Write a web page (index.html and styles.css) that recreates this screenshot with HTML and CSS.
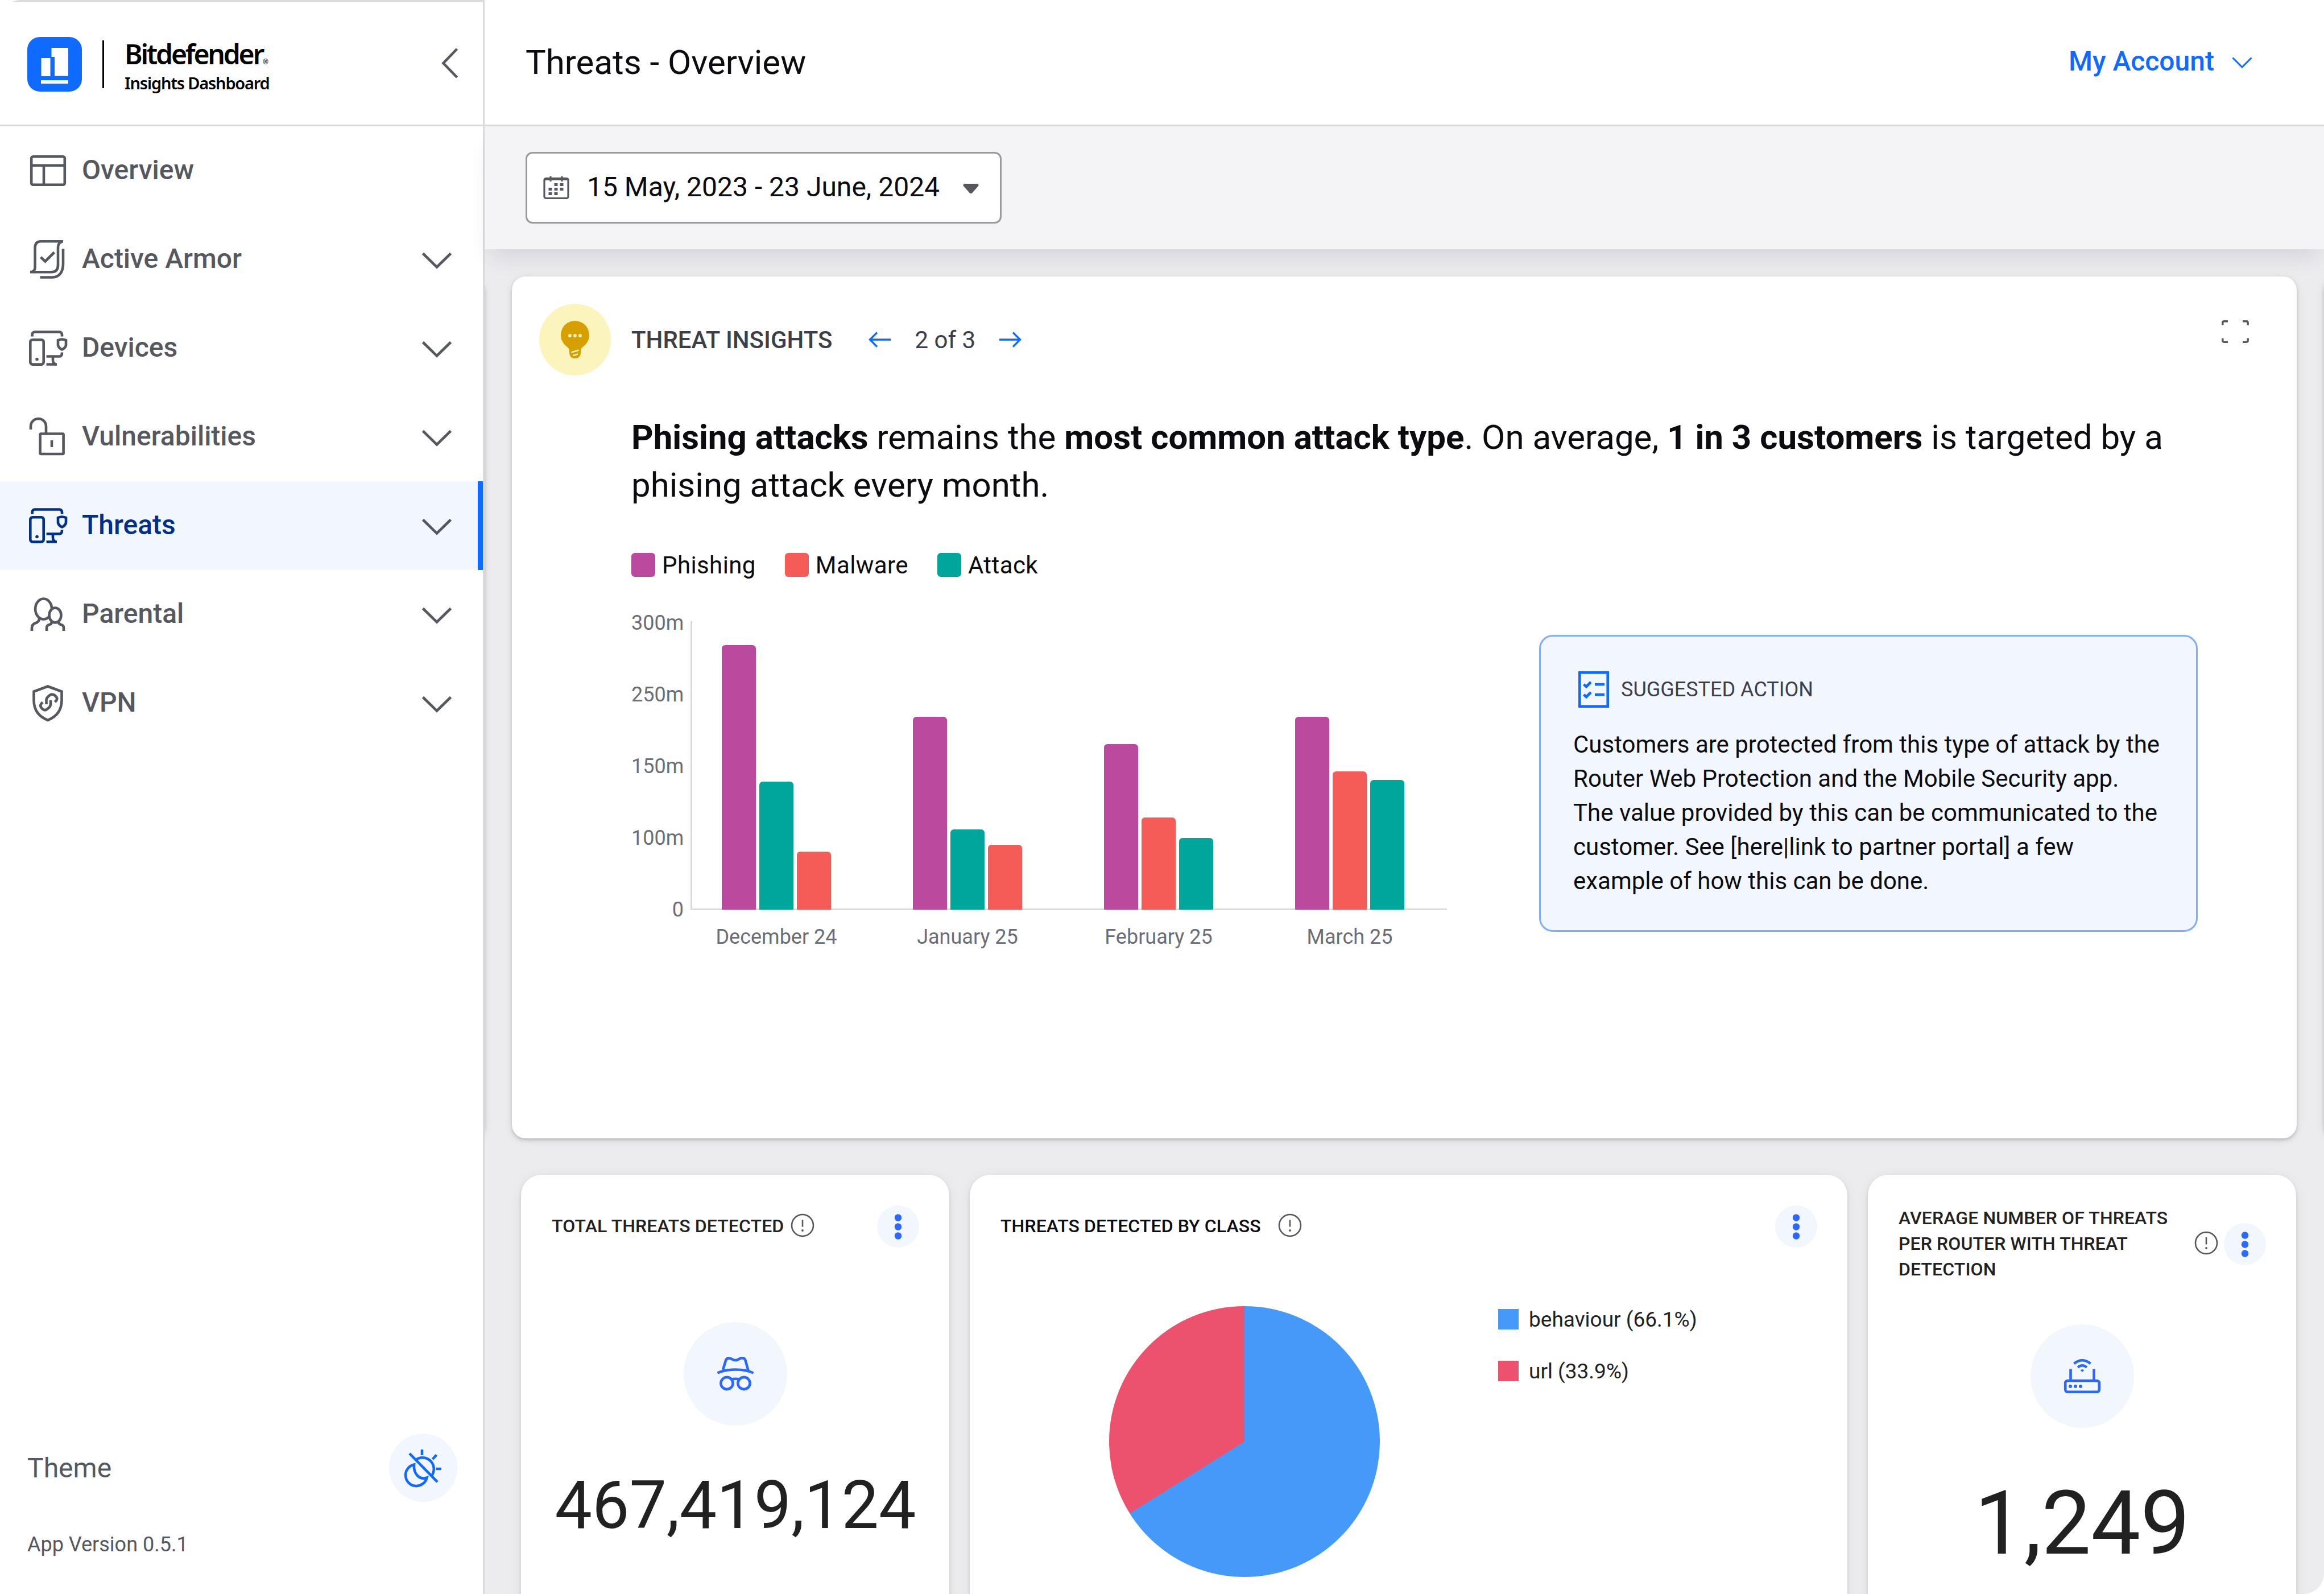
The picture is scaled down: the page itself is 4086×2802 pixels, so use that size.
FILE: index.html
```html
<!DOCTYPE html>
<html lang="en">
<head>
    <meta charset="UTF-8">
    <meta name="viewport" content="width=device-width, initial-scale=1.0">
    <title>Bitdefender Insights Dashboard</title>
    <link rel="stylesheet" href="styles.css">
</head>
<body>
    <!-- Shared icons -->
    <svg class="sprite" aria-hidden="true">
        <symbol id="chevron" viewBox="0 0 54 30">
            <path d="M2.5 2.5 27 26.500 51.500 2.500"/>
        </symbol>
        <symbol id="devices" viewBox="0 0 72 72">
            <path d="M8.600 15.500V12a4.500 4.500 0 0 1 4.500-4.500H56.500A4.500 4.500 0 0 1 61 12v3.500"/>
            <rect x="5.300" y="21.200" width="23.400" height="43.400" rx="4"/>
            <circle cx="17" cy="55.500" r="2.800" fill="currentColor" stroke="none"/>
            <path d="M54 22q7-3 14 0v9q-1.500 5-7 7.500-5.500-2.500-7-7.500z"/>
            <path d="M33.600 50.500H57q4 0 4-7M33.600 64.500H52M45 51v6q0 5 4 7"/>
        </symbol>
        <symbol id="info" viewBox="0 0 42 42">
            <circle cx="21" cy="21" r="19" stroke-width="2.600"/>
            <path d="M21 11v12.500" stroke-width="2.600"/>
            <circle cx="21" cy="30" r="1.900" fill="currentColor" stroke="none"/>
        </symbol>
        <symbol id="more" viewBox="0 0 74 74">
            <g fill="currentColor" stroke="none">
                <circle cx="37" cy="21.500" r="6.200"/>
                <circle cx="37" cy="37.500" r="6.200"/>
                <circle cx="37" cy="53.500" r="6.200"/>
            </g>
        </symbol>
    </svg>

    <div class="app">
        <aside class="sidebar">
            <div class="brand">
                <svg class="brand-logo" viewBox="0 0 96 96">
                    <rect width="96" height="96" rx="22" fill="#0f6bff"/>
                    <path fill="#fff" d="M24.500 37H40.500V69H24.500zM42.500 19H72V68.500H48V35H42.500zM24 76H72V82H24z"/>
                </svg>
                <div class="brand-text">
                    <div class="brand-name">Bitdefender<span class="reg">®</span></div>
                    <div class="brand-sub">Insights Dashboard</div>
                </div>
                <svg class="collapse" viewBox="0 0 30 54"><path d="M27.500 2 3.500 27 27.500 52"/></svg>
            </div>

            <nav class="nav">
                <a class="nav-item">
                    <svg class="icon" viewBox="0 0 72 72">
                        <rect x="7.200" y="11.200" width="58.600" height="49.600" rx="3"/>
                        <path d="M7 26.800H66M29 27V61"/>
                    </svg>
                    <span>Overview</span>
                </a>
                <a class="nav-item">
                    <svg class="icon" viewBox="0 0 72 72">
                        <path d="M63 4.300H24Q13.600 4.300 13.600 16V50Q13.600 58 5 58.300H42Q54 58.300 54 46V15Q54 6 62 4.500"/>
                        <path d="M63 17.500V45Q62 66 45 67.500H22.500M23.500 32 31.500 39.500 47.500 23.500"/>
                    </svg>
                    <span>Active Armor</span>
                    <svg class="chevron"><use href="#chevron"/></svg>
                </a>
                <a class="nav-item">
                    <svg class="icon"><use href="#devices"/></svg>
                    <span>Devices</span>
                    <svg class="chevron"><use href="#chevron"/></svg>
                </a>
                <a class="nav-item">
                    <svg class="icon" viewBox="0 0 72 72">
                        <path d="M6 23V17.500a13.500 13.500 0 0 1 27 0V30M43 42V54"/>
                        <rect x="22.600" y="30.500" width="41" height="35.500" rx="1.500"/>
                    </svg>
                    <span>Vulnerabilities</span>
                    <svg class="chevron"><use href="#chevron"/></svg>
                </a>
                <a class="nav-item active">
                    <svg class="icon"><use href="#devices"/></svg>
                    <span>Threats</span>
                    <svg class="chevron"><use href="#chevron"/></svg>
                </a>
                <a class="nav-item">
                    <svg class="icon" viewBox="0 0 72 72">
                        <ellipse cx="28.600" cy="26.500" rx="14.500" ry="18"/>
                        <ellipse cx="49" cy="37.500" rx="10.500" ry="13" class="front"/>
                        <path d="M8 65V60Q8 53 15 51 21 49 21 43M34 65V60Q34 55 39 54 43 53 43 49M64 65V60Q64 55 59 54 55 53 55 49"/>
                    </svg>
                    <span>Parental</span>
                    <svg class="chevron"><use href="#chevron"/></svg>
                </a>
                <a class="nav-item">
                    <svg class="icon" viewBox="0 0 72 72">
                        <path d="M36 6.500 60.500 15.500V31Q60.500 56 36 66 11.500 56 11.500 31V15.500z"/>
                        <path d="M27 34.500 25 36.500Q21.500 40.500 25 44.500L27 46.500Q31 50 35 46.500L38.500 43.500Q41 41 41 38V31M48.500 34 50.500 32Q54 28 50.500 24.500L48 22Q43 19 39.500 22L36 25Q33.500 27.500 33.500 30.500V38"/>
                    </svg>
                    <span>VPN</span>
                    <svg class="chevron"><use href="#chevron"/></svg>
                </a>
            </nav>

            <div class="side-footer">
                <div class="theme">
                    <span>Theme</span>
                    <button class="theme-toggle">
                        <svg class="icon" viewBox="0 0 72 72">
                            <path d="M12 11 61 61M34 4V14M52.500 21 59.500 13.500M59 38H68"/>
                            <path d="M22.500 22.500A20 20 0 0 1 51 50"/>
                            <path d="M20 30.500A19 19 0 1 0 42.500 53.500Q33 57 26 50T20 30.500z"/>
                        </svg>
                    </button>
                </div>
                <div class="version">App Version 0.5.1</div>
            </div>
        </aside>

        <main class="main">
            <header class="topbar">
                <h1>Threats - Overview</h1>
                <div class="account">
                    <span>My Account</span>
                    <svg class="account-chevron" viewBox="0 0 36 20"><path d="M1.500 1.500 18 18 34.500 1.500"/></svg>
                </div>
            </header>

            <div class="filters">
                <div class="date-picker">
                    <svg class="calendar" viewBox="0 0 48 42">
                        <rect x="3" y="4.500" width="42" height="35" rx="3"/>
                        <path d="M14 1V10M34 1V10M3 6.500H45"/>
                        <path class="days" d="M20.500 15.500H26.500M30.500 15.500H36.500M10.500 23.500H16.500M20.500 23.500H26.500M30.500 23.500H36.500M10.500 31.500H16.500M20.500 31.500H26.500"/>
                    </svg>
                    <span>15 May, 2023 - 23 June, 2024</span>
                    <svg class="caret" viewBox="0 0 28 18"><path d="M3 0H25Q29 1 27 4L16 16.500Q14 18 12 16.500L1 4Q-1 1 3 0z"/></svg>
                </div>
            </div>

            <div class="content">
                <section class="carousel">
                    <div class="slide"></div>
                    <article class="slide">
                        <div class="insight-head">
                            <div class="bulb">
                                <svg viewBox="0 0 50 66">
                                    <path fill="#d6a100" d="M25 0C39 0 50 11 50 25.500 50 37 42 43 36.500 48Q35 50 35 54V57Q34 66 25 66T15 57V54Q15 50 13.500 48C8 43 0 37 0 25.500 0 11 11 0 25 0z"/>
                                    <path stroke="#fcf4bd" stroke-width="2.500" fill="none" d="M18.500 55.500 31.500 51.500M21 61 30 58.500"/>
                                    <g fill="#fcf4bd"><circle cx="16" cy="26" r="2.900"/><circle cx="25" cy="26" r="2.900"/><circle cx="34" cy="26" r="2.900"/></g>
                                </svg>
                            </div>
                            <h2>THREAT INSIGHTS</h2>
                            <div class="pager">
                                <svg class="arrow" viewBox="0 0 40 28"><path d="M39 14H2.500M15 1.500 2.500 14 15 26.500"/></svg>
                                <span>2 of 3</span>
                                <svg class="arrow" viewBox="0 0 40 28"><path d="M1 14H37.500M25 1.500 37.500 14 25 26.500"/></svg>
                            </div>
                            <svg class="expand" viewBox="0 0 48 40">
                                <path d="M1.800 8.500V4.500Q1.800 1.800 4.500 1.800H11M37 1.800H43.500Q46.200 1.800 46.200 4.500V8.500M46.200 31.500V35.500Q46.200 38.200 43.500 38.200H37M11 38.200H4.500Q1.800 38.200 1.800 35.500V31.500"/>
                            </svg>
                        </div>

                        <div class="insight-body">
                            <p class="headline"><b>Phising attacks</b> remains the <b>most common attack type</b>. On average, <b>1 in 3 customers</b> is targeted by a phising attack every month.</p>

                            <div class="legend">
                                <div><i class="phishing"></i>Phishing</div>
                                <div><i class="malware"></i>Malware</div>
                                <div><i class="attack"></i>Attack</div>
                            </div>

                            <div class="insight-row">
                                <div class="chart">
                                    <div class="y-axis">
                                        <span>300m</span>
                                        <span>250m</span>
                                        <span>150m</span>
                                        <span>100m</span>
                                        <span>0</span>
                                    </div>
                                    <div class="plot-wrap">
                                        <div class="plot">
                                            <div class="group">
                                                <div class="bar phishing" style="height: 465px"></div>
                                                <div class="bar attack" style="height: 225px"></div>
                                                <div class="bar malware" style="height: 102px"></div>
                                            </div>
                                            <div class="group">
                                                <div class="bar phishing" style="height: 339px"></div>
                                                <div class="bar attack" style="height: 141px"></div>
                                                <div class="bar malware" style="height: 114px"></div>
                                            </div>
                                            <div class="group">
                                                <div class="bar phishing" style="height: 291px"></div>
                                                <div class="bar malware" style="height: 162px"></div>
                                                <div class="bar attack" style="height: 126px"></div>
                                            </div>
                                            <div class="group">
                                                <div class="bar phishing" style="height: 339px"></div>
                                                <div class="bar malware" style="height: 243px"></div>
                                                <div class="bar attack" style="height: 228px"></div>
                                            </div>
                                        </div>
                                        <div class="x-axis">
                                            <span>December 24</span>
                                            <span>January 25</span>
                                            <span>February 25</span>
                                            <span>March 25</span>
                                        </div>
                                    </div>
                                </div>

                                <div class="suggested">
                                    <div class="suggested-head">
                                        <svg class="icon" viewBox="0 0 72 72">
                                            <rect x="11.300" y="6.300" width="49.400" height="59.400"/>
                                            <path d="M18.500 27 23 31 31 23M38 27H55M18.500 45 23 49 31 41M38 45H55"/>
                                        </svg>
                                        <span>SUGGESTED ACTION</span>
                                    </div>
                                    <p>Customers are protected from this type of attack by the Router Web Protection and the Mobile Security app. The value provided by this can be communicated to the customer. See [here|link to partner portal] a few example of how this can be done.</p>
                                </div>
                            </div>
                        </div>
                    </article>
                    <div class="slide"></div>
                </section>

                <section class="cards">
                    <article class="card">
                        <div class="card-head">
                            <h3>TOTAL THREATS DETECTED</h3>
                            <svg class="info"><use href="#info"/></svg>
                            <svg class="more"><use href="#more"/></svg>
                        </div>
                        <div class="stat-icon">
                            <svg viewBox="0 0 66 60">
                                <path d="M1.500 28.500Q14 22.500 33 22.500T64.500 28.500M11 23 16 6.500Q18 1 24 2.800 31 6.500 33 6 35 6.500 41 3 48.500 0.500 50.500 6L55.500 24"/>
                                <circle cx="18" cy="46.500" r="10.600"/>
                                <circle cx="48" cy="46.500" r="10.600"/>
                                <path d="M25 40Q33 37.500 41 40"/>
                            </svg>
                        </div>
                        <div class="stat-value">467,419,124</div>
                    </article>

                    <article class="card card-wide">
                        <div class="card-head">
                            <h3>THREATS DETECTED BY CLASS</h3>
                            <svg class="info"><use href="#info"/></svg>
                            <svg class="more"><use href="#more"/></svg>
                        </div>
                        <div class="pie-row">
                            <div class="pie"></div>
                            <ul class="pie-legend">
                                <li><i class="behaviour"></i>behaviour (66.1%)</li>
                                <li><i class="url"></i>url (33.9%)</li>
                            </ul>
                        </div>
                    </article>

                    <article class="card card-router">
                        <div class="card-head">
                            <h3>AVERAGE NUMBER OF THREATS PER ROUTER WITH THREAT DETECTION</h3>
                            <svg class="info"><use href="#info"/></svg>
                            <svg class="more"><use href="#more"/></svg>
                        </div>
                        <div class="stat-icon">
                            <svg viewBox="0 0 66 60">
                                <rect x="3.200" y="38" width="59.600" height="19.800" rx="4"/>
                                <path d="M12.500 17.500V38M53.500 17.500V38M18.500 8Q33-3.500 47.500 8M25 14.500Q33 8 41 14.500"/>
                                <path d="M29.500 19Q33 17.500 36.500 19L33 23z" fill="currentColor" stroke="none"/>
                                <g fill="currentColor" stroke="none"><circle cx="12" cy="48" r="3"/><circle cx="21" cy="48" r="3"/><circle cx="30" cy="48" r="3"/></g>
                            </svg>
                        </div>
                        <div class="stat-value">1,249</div>
                    </article>
                </section>
            </div>
        </main>
    </div>
</body>
</html>
```
FILE: styles.css
```css
* {
    margin: 0;
    padding: 0;
    box-sizing: border-box;
}

body {
    font-family: Roboto, 'Liberation Sans', sans-serif;
    font-size: 48px;
    color: #0b0c0f;
    background: #fff;
}

svg {
    display: block;
    flex: none;
    fill: none;
    stroke: currentColor;
    stroke-width: 4.6;
}

.sprite {
    display: none;
}

.app {
    display: flex;
    height: 2802px;
    overflow: hidden;
    border-radius: 36px 0 36px 0;
}

.icon {
    width: 72px;
    height: 72px;
}

/* Sidebar */
.sidebar {
    width: 852px;
    flex: none;
    display: flex;
    flex-direction: column;
    border-top: 3px solid #dadadb;
    border-right: 3px solid #dadadb;
    color: #55585f;
}

.brand {
    height: 219px;
    display: flex;
    align-items: center;
    padding: 3px 43px 0 48px;
    border-bottom: 3px solid #dadadb;
    color: #000;
}

.brand-logo {
    width: 96px;
    height: 96px;
    stroke: none;
}

.brand-text {
    height: 84px;
    margin-left: 36px;
    padding-left: 36px;
    border-left: 3px solid #000;
    font-family: 'Noto Sans', 'Open Sans', sans-serif;
    font-weight: 600;
    white-space: nowrap;
}

.brand-name {
    font-size: 48px;
    line-height: 48px;
    letter-spacing: -3.2px;
}

.reg {
    font-size: 12px;
    font-weight: 400;
    letter-spacing: 0;
}

.brand-sub {
    font-size: 29px;
    line-height: 42px;
    letter-spacing: -1.2px;
    margin-top: -8px;
}

.collapse {
    width: 30px;
    height: 54px;
    margin: -3px 0 0 auto;
    color: #55585f;
}

.nav-item {
    height: 156px;
    display: flex;
    align-items: center;
    padding: 0 54px 0 48px;
    font-weight: 500;
}

.nav-item span {
    margin: -4px 0 0 24px;
}

.nav-item.active {
    background: #f2f6ff;
    border-right: 9px solid #0f6bff;
    padding-right: 45px;
    color: #003087;
}

.front {
    fill: #fff;
}

.chevron {
    width: 54px;
    height: 30px;
    margin: 3px 0 0 auto;
    color: #55585f;
}

.side-footer {
    margin-top: auto;
    padding: 0 45px 66px 48px;
}

.theme {
    display: flex;
    align-items: center;
    justify-content: space-between;
}

.theme-toggle {
    width: 120px;
    height: 120px;
    display: flex;
    align-items: center;
    justify-content: center;
    border: none;
    border-radius: 50%;
    background: #f2f6ff;
    color: #0f6bff;
}

.version {
    margin-top: 54px;
    font-size: 36px;
    line-height: 42px;
}

/* Top bar and filters */
.main {
    flex: 1;
    min-width: 0;
    display: flex;
    flex-direction: column;
    background: #ececee;
}

.topbar {
    height: 222px;
    flex: none;
    display: flex;
    align-items: center;
    justify-content: space-between;
    padding: 0 126px 0 72px;
    background: #fff;
    border-bottom: 3px solid #dadadb;
}

.topbar h1 {
    font-size: 60px;
    font-weight: 400;
}

.account {
    display: flex;
    align-items: center;
    color: #0f6bff;
    font-weight: 500;
}

.account span {
    margin-top: -4px;
}

.account-chevron {
    width: 36px;
    height: 20px;
    margin-left: 31px;
    stroke-width: 3;
}

.filters {
    height: 216px;
    flex: none;
    padding: 45px 72px;
    background: #f4f4f7;
    box-shadow: 0 24px 36px -12px rgba(60, 60, 100, 0.14);
    z-index: 1;
}

.date-picker {
    width: 837px;
    height: 126px;
    display: flex;
    align-items: center;
    padding: 0 37px 0 27px;
    background: #fff;
    border: 3px solid #9b9b9e;
    border-radius: 12px;
}

.calendar {
    width: 48px;
    height: 42px;
    color: #55585f;
    stroke-width: 3.200;
}

.days {
    stroke-width: 5;
}

.date-picker span {
    margin: -4px 0 0 30px;
    white-space: nowrap;
}

.caret {
    width: 28px;
    height: 18px;
    margin-left: auto;
    margin-top: 4px;
    fill: #55585f;
    stroke: none;
}

/* Insights carousel */
.carousel {
    height: 1611px;
    display: flex;
    justify-content: center;
    gap: 48px;
    padding: 48px 0;
    overflow: hidden;
}

.slide {
    flex: 0 0 3138px;
    padding: 48px;
    background: #fff;
    border-radius: 24px;
    box-shadow: 0 3px 6px rgba(0, 0, 0, 0.18), 0 3px 18px rgba(0, 0, 0, 0.07);
}

.insight-head {
    height: 126px;
    display: flex;
    align-items: center;
    color: #3c3f48;
    font-size: 42px;
}

.bulb {
    width: 126px;
    height: 126px;
    display: flex;
    align-items: center;
    justify-content: center;
    border-radius: 50%;
    background: #fcf4bd;
}

.bulb svg {
    width: 50px;
    height: 66px;
    stroke: none;
}

.insight-head h2 {
    margin-left: 36px;
    font-size: 42px;
    font-weight: 500;
}

.pager {
    display: flex;
    align-items: center;
    gap: 41px;
    margin-left: 64px;
}

.arrow {
    width: 40px;
    height: 28px;
    color: #0f6bff;
    stroke-width: 3.400;
}

.expand {
    width: 48px;
    height: 40px;
    margin-left: auto;
    margin-right: 36px;
    margin-bottom: 28px;
    color: #55585f;
    stroke-width: 3.400;
}

.insight-body {
    padding: 67px 0 0 162px;
}

.headline {
    max-width: 2780px;
    font-size: 60px;
    line-height: 84px;
}

.legend {
    display: flex;
    gap: 51px;
    margin-top: 77px;
    font-size: 42px;
    line-height: 44px;
    letter-spacing: 0.4px;
}

.legend div {
    height: 42px;
    display: flex;
    gap: 12px;
}

.legend i {
    width: 42px;
    height: 42px;
    border-radius: 6px;
}

.phishing {
    background: #b94a9e;
}

.malware {
    background: #f65c57;
}

.attack {
    background: #00a699;
}

.insight-row {
    display: flex;
    align-items: flex-start;
    margin-top: 59px;
}

.chart {
    width: 1434px;
    display: flex;
    color: #6b6e76;
    font-size: 36px;
    line-height: 42px;
}

.y-axis {
    width: 92px;
    height: 546px;
    display: flex;
    flex-direction: column;
    justify-content: space-between;
    margin-top: 1px;
    text-align: right;
}

.plot-wrap {
    flex: 1;
    margin: 19px 0 0 12px;
}

.plot {
    height: 508px;
    display: flex;
    align-items: flex-end;
    gap: 144px;
    padding-left: 52px;
    border-left: 3px solid #dadadb;
    border-bottom: 3px solid #dadadb;
}

.group {
    display: flex;
    align-items: flex-end;
    gap: 6px;
    margin-bottom: -2px;
}

.bar {
    width: 60px;
    border-radius: 6px 6px 0 0;
}

.x-axis {
    display: flex;
    gap: 144px;
    margin-top: 26px;
    padding-left: 55px;
}

.x-axis span {
    width: 192px;
    display: flex;
    justify-content: center;
    white-space: nowrap;
}

.suggested {
    width: 1158px;
    height: 522px;
    margin: 43px 0 0 162px;
    padding: 57px;
    background: #f2f6ff;
    border: 3px solid #80aeff;
    border-radius: 24px;
}

.suggested-head {
    display: flex;
    align-items: center;
    gap: 12px;
    color: #3c3f48;
    font-size: 36px;
}

.suggested .icon {
    color: #0f6bff;
}

.suggested p {
    max-width: 1034px;
    margin-top: 31px;
    font-size: 42px;
    line-height: 60px;
}

/* Stat cards */
.cards {
    height: 753px;
    display: grid;
    grid-template-columns: 753px 1543px 753px;
    gap: 36px;
    padding: 16px;
    margin: 0 32px 0 48px;
    overflow: hidden;
}

.card {
    height: 1000px;
    padding: 54px 53px 54px 54px;
    background: #fff;
    border-radius: 36px;
    box-shadow: 0 3px 6px rgba(0, 0, 0, 0.12), 0 3px 24px rgba(0, 0, 0, 0.06);
    color: #212121;
}

.card-head {
    display: flex;
    align-items: center;
}

.card-head h3 {
    margin-top: -2px;
    font-size: 32px;
    line-height: 45px;
    font-weight: 500;
    letter-spacing: 0.1px;
}

.info {
    width: 42px;
    height: 42px;
    margin: -4px 0 0 12px;
    color: #55585f;
}

.more {
    width: 74px;
    height: 74px;
    margin-left: auto;
    border-radius: 50%;
    background: #f2f7fe;
    color: #2d68fe;
}

.stat-icon {
    width: 182px;
    height: 182px;
    display: flex;
    align-items: center;
    justify-content: center;
    margin: 131px auto 0;
    border-radius: 50%;
    background: #f2f7fe;
    color: #2d68fe;
}

.stat-icon svg {
    width: 66px;
    height: 60px;
}

.stat-value {
    margin: 72px -20px 0;
    font-size: 116.5px;
    line-height: 136px;
    text-align: center;
}

.card-wide h3 {
    color: #0b0c0f;
}

.card-wide .info {
    margin-left: 30px;
}

.pie-row {
    display: flex;
    align-items: flex-start;
    margin: 103px 0 0 191px;
}

.pie {
    width: 476px;
    height: 476px;
    border-radius: 50%;
    background: conic-gradient(#4599f9 66.1%, #ec526d 0);
}

.pie-legend {
    list-style: none;
    margin: 2px 0 0 208px;
    font-size: 37px;
}

.pie-legend li {
    height: 42px;
    display: flex;
    align-items: center;
    gap: 18px;
    margin-bottom: 49px;
}

.pie-legend i {
    width: 36px;
    height: 36px;
}

.behaviour {
    background: #4599f9;
}

.url {
    background: #ec526d;
}

.card-router h3 {
    width: 520px;
    margin-top: 0;
}

.card-router .info {
    margin-left: 0;
}

.card-router .stat-icon {
    margin-top: 74px;
}

.card-router .stat-value {
    margin-top: 77px;
    font-size: 155px;
    line-height: 182px;
}
```
